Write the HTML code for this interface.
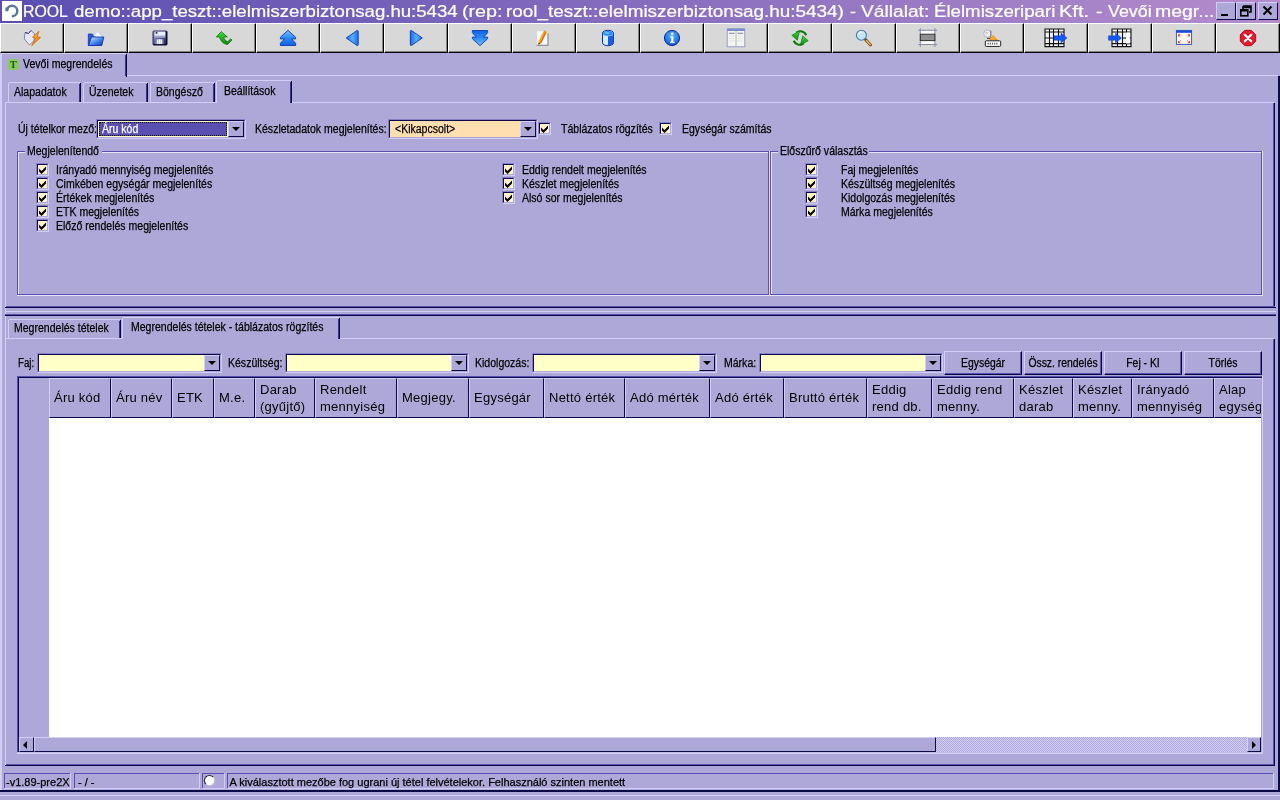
<!DOCTYPE html><html><head><meta charset="utf-8"><title>ROOL</title><style>
*{box-sizing:border-box;margin:0;padding:0}
html,body{width:1280px;height:800px;overflow:hidden;background:#aea8d9;font-family:"Liberation Sans",sans-serif;font-size:11px;color:#000}
.a{position:absolute}
.t{position:absolute;white-space:nowrap;line-height:14px;font-size:12px;transform-origin:0 0;transform:scaleX(0.877);-webkit-text-stroke:0.25px #000}
.h{position:absolute;white-space:nowrap;font-size:13px;line-height:17px;letter-spacing:0.25px}
.tb{position:absolute;top:23px;width:64px;height:30px;background:#d8d8d8;border-left:1px solid #fff;border-top:1px solid #fff;border-right:1px solid #000;border-bottom:1px solid #000}
.tb:after{content:"";position:absolute;right:0;top:0;bottom:0;width:1px;background:#848284}
.tb:before{content:"";position:absolute;left:0;right:0;bottom:0;height:1px;background:#848284}
.tb svg{position:absolute;left:23px;top:6px;width:16px;height:16px}
.cb{position:absolute;width:13px;height:13px;background:#fff4c8;border-top:1px solid #8a82c8;border-left:1px solid #8a82c8;border-right:1px solid #d2cef8;border-bottom:1px solid #d2cef8}
.cb:before{content:"";position:absolute;left:0;top:0;right:0;bottom:0;border-top:1px solid #0c0a46;border-left:1px solid #0c0a46;border-right:1px solid #aea8d9;border-bottom:1px solid #aea8d9}
.cb svg{position:absolute;left:1px;top:1px;width:9px;height:9px}
.combo{position:absolute;height:20px;border-style:solid;border-width:1px;border-color:#8a82c8 #d2cef8 #d2cef8 #8a82c8}
.combo:before{content:"";position:absolute;left:0;top:0;right:0;bottom:0;border-style:solid;border-width:1px;border-color:#0c0a46 #aea8d9 #aea8d9 #0c0a46}
.inn{position:absolute;left:1px;top:1px;right:1px;bottom:1px}
.cbtn{position:absolute;right:0;top:0;width:16px;height:16px;background:#aea8d9;border-top:1px solid #d2cef8;border-left:1px solid #d2cef8;border-right:1px solid #0c0a46;border-bottom:1px solid #0c0a46}
.cbtn:after{content:"";position:absolute;left:3px;top:5px;border-left:4px solid transparent;border-right:4px solid transparent;border-top:4px solid #000}
.btn{position:absolute;height:24px;background:#aea8d9;border-top:1px solid #d2cef8;border-left:1px solid #d2cef8;border-right:1px solid #0c0a46;border-bottom:1px solid #0c0a46;text-align:center;line-height:23px;font-size:12px;white-space:nowrap;overflow:hidden}
.btn span{position:absolute;left:50%;top:0;transform:translateX(-50%) scaleX(0.865);-webkit-text-stroke:0.25px #000}
.btn:before{content:"";position:absolute;left:0;top:0;right:0;bottom:0;border-right:1px solid #5a4eb1;border-bottom:1px solid #5a4eb1}
.hl{position:absolute;height:1px}
.vl{position:absolute;width:1px}
.hc{position:absolute;top:378px;height:39px;border-left:1px solid #d2cef8;border-top:1px solid #d2cef8;border-right:1px solid #0c0a46;border-bottom:1px solid #0c0a46}
</style></head><body><div style="position:absolute;left:0;top:0;width:1280px;height:800px;will-change:transform;opacity:0.999">
<div class="a" style="left:0;top:0;width:1280px;height:23px;background:linear-gradient(90deg,#5a4eb1 0%,#b48ccc 100%)"></div>
<div class="a" style="left:2px;top:1px;width:20px;height:20px;background:#fff"><svg width="20" height="20" viewBox="0 0 20 20"><path d="M4.9 9.6 A5.2 5.2 0 1 1 9.8 15.2" fill="none" stroke="#587a9e" stroke-width="2.5"/><path d="M3.4 6.6 L6.6 6.2 L6.4 10.2 L3.4 10.2 Z" fill="#587a9e"/></svg></div>
<div class="a" style="left:22.51px;top:1px;font-size:16px;line-height:21px;color:#fff;white-space:nowrap;transform-origin:0 0;transform:scaleX(0.9900);-webkit-text-stroke:0.2px #fff">ROOL</div>
<div class="a" style="left:73.75px;top:1px;font-size:16px;line-height:21px;color:#fff;white-space:nowrap;transform-origin:0 0;transform:scaleX(1.1626);-webkit-text-stroke:0.2px #fff">demo::app_teszt::elelmiszerbiztonsag.hu:5434</div>
<div class="a" style="left:461.77px;top:1px;font-size:16px;line-height:21px;color:#fff;white-space:nowrap;transform-origin:0 0;transform:scaleX(1.2314);-webkit-text-stroke:0.2px #fff">(rep:</div>
<div class="a" style="left:506.32px;top:1px;font-size:16px;line-height:21px;color:#fff;white-space:nowrap;transform-origin:0 0;transform:scaleX(1.1796);-webkit-text-stroke:0.2px #fff">rool_teszt::elelmiszerbiztonsag.hu:5434)</div>
<div class="a" style="left:849.50px;top:1px;font-size:16px;line-height:21px;color:#fff;white-space:nowrap;transform-origin:0 0;transform:scaleX(1.1000);-webkit-text-stroke:0.2px #fff">-</div>
<div class="a" style="left:861.00px;top:1px;font-size:16px;line-height:21px;color:#fff;white-space:nowrap;transform-origin:0 0;transform:scaleX(1.1987);-webkit-text-stroke:0.2px #fff">Vállalat:</div>
<div class="a" style="left:933.83px;top:1px;font-size:16px;line-height:21px;color:#fff;white-space:nowrap;transform-origin:0 0;transform:scaleX(1.1662);-webkit-text-stroke:0.2px #fff">Élelmiszeripari</div>
<div class="a" style="left:1059.25px;top:1px;font-size:16px;line-height:21px;color:#fff;white-space:nowrap;transform-origin:0 0;transform:scaleX(1.2522);-webkit-text-stroke:0.2px #fff">Kft.</div>
<div class="a" style="left:1096.00px;top:1px;font-size:16px;line-height:21px;color:#fff;white-space:nowrap;transform-origin:0 0;transform:scaleX(1.2000);-webkit-text-stroke:0.2px #fff">-</div>
<div class="a" style="left:1107.50px;top:1px;font-size:16px;line-height:21px;color:#fff;white-space:nowrap;transform-origin:0 0;transform:scaleX(1.1144);-webkit-text-stroke:0.2px #fff">Vevői</div>
<div class="a" style="left:1154.78px;top:1px;font-size:16px;line-height:21px;color:#fff;white-space:nowrap;transform-origin:0 0;transform:scaleX(1.2161);-webkit-text-stroke:0.2px #fff">megr...</div>
<div class="a" style="left:1216px;top:2px;width:20px;height:18px;background:#aea8d9;border-top:1px solid #d2cef8;border-left:1px solid #d2cef8;border-right:1px solid #0c0a46;border-bottom:1px solid #0c0a46"><svg class="a" style="left:0;top:0" width="18" height="16" viewBox="0 0 18 16"><rect x="4" y="11" width="7" height="2" fill="#000"/></svg></div>
<div class="a" style="left:1236px;top:2px;width:20px;height:18px;background:#aea8d9;border-top:1px solid #d2cef8;border-left:1px solid #d2cef8;border-right:1px solid #0c0a46;border-bottom:1px solid #0c0a46"><svg class="a" style="left:0;top:0" width="18" height="16" viewBox="0 0 18 16"><path d="M6 3h8v6h-2 M6 4.5h8 M6 3v3" fill="none" stroke="#000" stroke-width="1.6"/><rect x="3.8" y="6.8" width="7" height="6" fill="none" stroke="#000" stroke-width="1.6"/><path d="M3.8 7.6h7" stroke="#000" stroke-width="1.8"/></svg></div>
<div class="a" style="left:1258px;top:2px;width:20px;height:18px;background:#aea8d9;border-top:1px solid #d2cef8;border-left:1px solid #d2cef8;border-right:1px solid #0c0a46;border-bottom:1px solid #0c0a46"><svg class="a" style="left:0;top:0" width="18" height="16" viewBox="0 0 18 16"><path d="M4.5 3.5l8 8 M12.5 3.5l-8 8" stroke="#000" stroke-width="2" fill="none"/></svg></div>
<svg width="0" height="0" style="position:absolute"><defs>
<linearGradient id="gb" x1="0" y1="0" x2="0" y2="1"><stop offset="0" stop-color="#7fc0ff"/><stop offset="0.5" stop-color="#2a8cf8"/><stop offset="1" stop-color="#1060e0"/></linearGradient>
<linearGradient id="gbh" x1="0" y1="0" x2="1" y2="0"><stop offset="0" stop-color="#1866e0"/><stop offset="0.5" stop-color="#58b0ff"/><stop offset="1" stop-color="#1a70e8"/></linearGradient>
<linearGradient id="gg" x1="0" y1="0" x2="0" y2="1"><stop offset="0" stop-color="#38e038"/><stop offset="1" stop-color="#0c8a0c"/></linearGradient>
<linearGradient id="gf" x1="0" y1="0" x2="1" y2="1"><stop offset="0" stop-color="#e8f4ff"/><stop offset="0.5" stop-color="#4a8cf0"/><stop offset="1" stop-color="#0a30c0"/></linearGradient>
<linearGradient id="go" x1="0" y1="0" x2="1" y2="1"><stop offset="0" stop-color="#ffd040"/><stop offset="1" stop-color="#e86000"/></linearGradient>
<radialGradient id="gi" cx="0.5" cy="0.35" r="0.7"><stop offset="0" stop-color="#58b8ff"/><stop offset="1" stop-color="#0a50d8"/></radialGradient>
<linearGradient id="gs" x1="0" y1="0" x2="1" y2="0"><stop offset="0" stop-color="#8088b8"/><stop offset="0.5" stop-color="#e8e8f8"/><stop offset="1" stop-color="#404080"/></linearGradient>
<linearGradient id="gfl" x1="0" y1="0" x2="1" y2="1"><stop offset="0" stop-color="#a4a6d0"/><stop offset="0.55" stop-color="#54568c"/><stop offset="1" stop-color="#14144a"/></linearGradient>
</defs></svg>
<div class="tb" style="left:0px"><svg viewBox="0 0 16 16" style="overflow:visible"><path d="M1 2.5l3.5 1 2.5-3 3.5 3.2-.5 7-4.5 4.3L.3 9z" fill="#e4e8fa" stroke="#6a6e98" stroke-width=".8"/><path d="M1 2.5l3.5 1 2.5-3" fill="none" stroke="#3a3e78" stroke-width="1"/><path d="M15 1.2l-6.5 6 3 .8-3.8 7.8 8.8-8.4-3.2-.8z" fill="url(#go)" stroke="#d06000" stroke-width=".7"/></svg></div>
<div class="tb" style="left:64px"><svg viewBox="0 0 16 16" style="overflow:visible"><path d="M0.3 4h4l1.2 1.5h2V15.5H0.3z" fill="#2a5ad8" stroke="#0a2aa8" stroke-width=".7"/><path d="M5.5 6l4-4.5 4 4v3z" fill="#f4f8ff" stroke="#a8b8e0" stroke-width=".5"/><path d="M0.5 15.5l3-8.5h12.3l-2 8.5z" fill="url(#gf)" stroke="#0a28b0" stroke-width=".8"/></svg></div>
<div class="tb" style="left:128px"><svg viewBox="0 0 16 16" style="overflow:visible"><rect x="1" y="1" width="14" height="14" rx=".8" fill="url(#gfl)" stroke="#16164a" stroke-width=".9"/><rect x="2.6" y="1.6" width="10.6" height="5" fill="#eef0ff"/><rect x="2.6" y="5.600" width="10.600" height="2.200" fill="#a0a4cc"/><rect x="3.600" y="1.800" width="1.800" height="2" fill="#34346e"/><rect x="3.500" y="9.200" width="9" height="5.300" fill="url(#gs)"/><path d="M5.500 9.600v4.600M7.500 9.600v4.600M9.500 9.600v4.600" stroke="#fff" stroke-width=".8"/><path d="M14.600 1.500v13.100H1.500" fill="none" stroke="#0a0a30" stroke-width="1"/></svg></div>
<div class="tb" style="left:192px"><svg viewBox="0 0 16 16" style="overflow:visible"><path d="M5.3 1.6L0.3 7h3.2c1 4 4 7.4 8.2 7.4L16 10l-1.2-1.2-3 2.8c-2.3-.4-3.6-2.2-4-4.6h3.5z" fill="url(#gg)" stroke="#0a6a0a" stroke-width=".7"/></svg></div>
<div class="tb" style="left:256px"><svg viewBox="0 0 16 16" style="overflow:visible"><path d="M8 .3l7.6 7v1.6h-4l4 4.3v2.3H.4v-2.3l4-4.3h-4V7.3z" fill="url(#gb)" stroke="#0a3cb0" stroke-width=".9" stroke-linejoin="round"/></svg></div>
<div class="tb" style="left:320px"><svg viewBox="0 0 16 16" style="overflow:visible"><path d="M2.2 8L13 .6c.8-.4 1.2 0 1.2.8v13.2c0 .8-.4 1.2-1.2.8z" fill="url(#gbh)" stroke="#0a3cb0" stroke-width=".9" stroke-linejoin="round"/></svg></div>
<div class="tb" style="left:384px"><svg viewBox="0 0 16 16" style="overflow:visible"><path d="M14.3 8L3.5.6C2.700.2 2.300.6 2.300 1.400v13.200c0 .8.400 1.200 1.200.8z" fill="url(#gbh)" stroke="#0a3cb0" stroke-width=".9" stroke-linejoin="round"/></svg></div>
<div class="tb" style="left:448px"><svg viewBox="0 0 16 16" style="overflow:visible"><g transform="translate(0,16) scale(1,-1)"><path d="M8 .3l7.6 7v1.6h-4l4 4.3v2.3H.4v-2.3l4-4.3h-4V7.3z" fill="url(#gb)" stroke="#0a3cb0" stroke-width=".9" stroke-linejoin="round"/></g></svg></div>
<div class="tb" style="left:512px"><svg viewBox="0 0 16 16" style="overflow:visible"><rect x=".8" y="1" width="11" height="14" fill="#fbfbff" stroke="#c8cce0" stroke-width=".5"/><path d="M.5 15.3h11.8M12 3v12.3" stroke="#707080" stroke-width=".8" fill="none"/><path d="M8.3.8l2.200 1.100-5.500 11.300-2.400 1.300.200-2.700z" fill="#ffc020" stroke="#d87800" stroke-width=".6"/><path d="M9.300 1.300l1.200.6-5.500 11.300-1.100-.5z" fill="#e86800"/><path d="M2.600 14.500l.2-1.800 1.400.9z" fill="#402000"/></svg></div>
<div class="tb" style="left:576px"><svg viewBox="0 0 16 16" style="overflow:visible"><path d="M2.500 3.300c0-4 11-4 11 0v9.400c0 4-11 4-11 0z" fill="#d8ecff" stroke="#0a30b0" stroke-width="1"/><path d="M8 6.200c2.500 0 5.500-.8 5.500-2.500v9c0 1.700-3 2.800-5.500 2.800z" fill="#1a5ce0"/><ellipse cx="8" cy="3.400" rx="5" ry="2.400" fill="#2a8cf8"/><ellipse cx="7" cy="3" rx="2.500" ry="1" fill="#6ac0ff"/></svg></div>
<div class="tb" style="left:640px"><svg viewBox="0 0 16 16" style="overflow:visible"><circle cx="8" cy="8" r="7.600" fill="url(#gi)" stroke="#0a2a98" stroke-width="1"/><circle cx="8.200" cy="3.800" r="1.300" fill="#fff"/><path d="M6.200 6.300h3.200v5.500h1.200v1.200H6v-1.200h1.300V7.500H6.200z" fill="#fff"/></svg></div>
<div class="tb" style="left:704px"><svg viewBox="0 0 16 16" style="overflow:visible"><rect x="-.8" y="-1.200" width="17.600" height="18" fill="#f4f4f0" stroke="#8a94c0" stroke-width=".9"/><rect x="-.8" y="-1.200" width="17.600" height="2.200" fill="#7a8cc8"/><path d="M8 1v15.800" stroke="#a0a8c8" stroke-width=".8"/><path d="M1 3.300h5.500M9.500 3.300h5.500" stroke="#707890" stroke-width=".9"/><path d="M1 6h5M1 8.500h5M9.500 6h5M9.500 8.500h5M1 11h5M9.500 11h5" stroke="#dcdcd8" stroke-width=".7"/></svg></div>
<div class="tb" style="left:768px"><svg viewBox="0 0 16 16" style="overflow:visible"><path d="M14.300 5.200A6.400 6.400 0 0 0 4.500 2.600" fill="none" stroke="#0c7a0c" stroke-width="2.200"/><path d="M-.2 5.300L7.600 .8 5.300 10.200z" fill="url(#gg)" stroke="#0a6a0a" stroke-width=".6"/><path d="M1.700 10.800A6.400 6.400 0 0 0 11.500 13.400" fill="none" stroke="#0c7a0c" stroke-width="2.200"/><path d="M16.200 10.700L8.400 15.200 10.700 5.800z" fill="url(#gg)" stroke="#0a6a0a" stroke-width=".6"/></svg></div>
<div class="tb" style="left:832px"><svg viewBox="0 0 16 16" style="overflow:visible"><path d="M9.300 9.300l5.200 5.600" stroke="#6a4a18" stroke-width="3" stroke-linecap="round"/><path d="M10.500 10.600l3.800 4.100" stroke="#ecb850" stroke-width="1.500" stroke-linecap="round"/><circle cx="5.400" cy="5.200" r="5" fill="#c4e6fa" stroke="#4a78b0" stroke-width="1.100"/><path d="M2.500 4.500c.5-1.500 2-2.500 3.500-2.300" stroke="#fff" stroke-width="1.100" fill="none"/></svg></div>
<div class="tb" style="left:896px"><svg viewBox="0 0 16 16" style="overflow:visible"><rect x=".3" y=".300" width="14.600" height="14.200" fill="#fff"/><path d="M-1.600.3h18.600M-1.600 14.500h18.600M.3-1.700v18.700M14.900-1.700v18.700" stroke="#7a80a8" stroke-width=".9"/><rect x=".3" y="4.200" width="14.600" height="6.400" fill="#909090" stroke="#303030" stroke-width="1"/></svg></div>
<div class="tb" style="left:960px"><svg viewBox="0 0 16 16" style="overflow:visible"><circle cx="3.400" cy="3.600" r="3.600" fill="#f0f0f4" stroke="#a8a8b8" stroke-width=".8"/><circle cx="2.800" cy="3" r="1.200" fill="#c8c8d8"/><path d="M6.800.5v9" stroke="#606070" stroke-width=".8"/><path d="M9 5.300l4.500 4.600H5.500z" fill="#f8a818" stroke="#d88000" stroke-width=".4"/><path d="M3 8.300h3" stroke="#303030" stroke-width="1"/><rect x="1.300" y="10.800" width="15.400" height="5.600" rx="1" fill="#fff" stroke="#202020" stroke-width="1"/><path d="M3.500 13.600h11" stroke="#606060" stroke-width="1.600" stroke-dasharray="1.200 1"/></svg></div>
<div class="tb" style="left:1024px"><svg viewBox="0 0 16 16" style="overflow:visible"><g transform="translate(-3,-1)"><rect x="0" y="0" width="19" height="17.600" fill="#f4f4f8"/><path d="M0 0h19v17.600H0zM0 3h19M0 9h8M0 14.600h19M4.500 0v17.600M8.500 0v17.600M13.500 0v17.600" fill="none" stroke="#101010" stroke-width="1.100"/></g><g transform="translate(6,0)"><path d="M0 5.800h7V3l6 5-6 5v-2.800H0z" fill="#1458f8" stroke="#0a40d0" stroke-width=".5"/></g></svg></div>
<div class="tb" style="left:1088px"><svg viewBox="0 0 16 16" style="overflow:visible"><g transform="translate(19,-1) scale(-1,1)"><rect x="0" y="0" width="19" height="17.600" fill="#f4f4f8"/><path d="M0 0h19v17.600H0zM0 3h19M0 9h8M0 14.600h19M4.500 0v17.600M8.500 0v17.600M13.500 0v17.600" fill="none" stroke="#101010" stroke-width="1.100"/></g><rect x="14" y="2.500" width="3.800" height="11" fill="#fff"/><g transform="translate(-3.500,0)"><path d="M0 5.800h7V3l6 5-6 5v-2.800H0z" fill="#1458f8" stroke="#0a40d0" stroke-width=".5"/></g></svg></div>
<div class="tb" style="left:1152px"><svg viewBox="0 0 16 16" style="overflow:visible"><rect x=".4" y=".4" width="15.200" height="14" fill="#fff8f4" stroke="#2a50c0" stroke-width=".9"/><rect x=".4" y=".4" width="15.200" height="2.400" fill="#1a48d0"/><path d="M2 4.300h2.800l-2.800 2.800zM14 4.300h-2.800l2.800 2.800zM2 13.200h2.800L2 10.400zM14 13.200h-2.800l2.800-2.800z" fill="#e03818"/><path d="M3 5.300l2 2M13 5.300l-2 2M3 12.200l2-2M13 12.200l-2-2" stroke="#f08060" stroke-width="1"/></svg></div>
<div class="tb" style="left:1216px"><svg viewBox="0 0 16 16" style="overflow:visible"><path d="M4.800.3h6.400l4.500 4.500v6.400l-4.500 4.500H4.800L.3 11.200V4.800z" fill="#e8182c" stroke="#a80818" stroke-width=".9"/><path d="M4.800 4.800l6.400 6.400M11.200 4.800l-6.400 6.400" stroke="#fff" stroke-width="2.300" stroke-linecap="round"/></svg></div>
<div class="vl" style="left:0px;top:54px;height:738px;width:2px;background:#d2cef8"></div>
<div class="hl" style="left:1px;top:53px;width:125px;height:1px;background:#d2cef8"></div>
<div class="vl" style="left:126px;top:54px;height:23px;width:1px;background:#0c0a46"></div>
<div class="vl" style="left:125px;top:55px;height:21px;width:1px;background:#3a3290"></div>
<div class="hl" style="left:127px;top:75px;width:1151px;height:1px;background:#d2cef8"></div>
<div class="vl" style="left:1278px;top:76px;height:716px;width:2px;background:#0c0a46"></div>
<div class="hl" style="left:0px;top:790px;width:1280px;height:2px;background:#0c0a46"></div>
<div class="hl" style="left:0px;top:795px;width:1280px;height:1px;background:#d2cef8"></div>
<div class="a" style="left:8px;top:59px;width:11px;height:11px;background:#8cc860;border-radius:2px"></div>
<div class="a" style="left:10px;top:58px;font-family:'Liberation Serif';font-weight:bold;font-size:10px;line-height:13px;color:#0a5a0a">T</div>
<div class="t" style="left:23px;top:56.5px;">Vevői megrendelés</div>
<div class="hl" style="left:9px;top:82px;width:71px;height:1px;background:#d2cef8"></div>
<div class="vl" style="left:8px;top:83px;height:19px;width:1px;background:#d2cef8"></div>
<div class="vl" style="left:80px;top:83px;height:19px;width:1px;background:#0c0a46"></div>
<div class="vl" style="left:79px;top:84px;height:18px;width:1px;background:#3a3290"></div>
<div class="t" style="left:14px;top:84.5px;">Alapadatok</div>
<div class="hl" style="left:84px;top:82px;width:63px;height:1px;background:#d2cef8"></div>
<div class="vl" style="left:83px;top:83px;height:19px;width:1px;background:#d2cef8"></div>
<div class="vl" style="left:147px;top:83px;height:19px;width:1px;background:#0c0a46"></div>
<div class="vl" style="left:146px;top:84px;height:18px;width:1px;background:#3a3290"></div>
<div class="t" style="left:89px;top:84.5px;">Üzenetek</div>
<div class="hl" style="left:151px;top:82px;width:63px;height:1px;background:#d2cef8"></div>
<div class="vl" style="left:150px;top:83px;height:19px;width:1px;background:#d2cef8"></div>
<div class="vl" style="left:214px;top:83px;height:19px;width:1px;background:#0c0a46"></div>
<div class="vl" style="left:213px;top:84px;height:18px;width:1px;background:#3a3290"></div>
<div class="t" style="left:156px;top:84.5px;">Böngésző</div>
<div class="hl" style="left:217px;top:80px;width:74px;height:1px;background:#d2cef8"></div>
<div class="vl" style="left:216px;top:81px;height:22px;width:1px;background:#d2cef8"></div>
<div class="vl" style="left:291px;top:81px;height:22px;width:1px;background:#0c0a46"></div>
<div class="vl" style="left:290px;top:82px;height:21px;width:1px;background:#3a3290"></div>
<div class="t" style="left:224px;top:83.5px;">Beállítások</div>
<div class="hl" style="left:5px;top:102px;width:211px;height:1px;background:#d2cef8"></div>
<div class="hl" style="left:292px;top:102px;width:982px;height:1px;background:#d2cef8"></div>
<div class="vl" style="left:5px;top:102px;height:664px;width:1px;background:#d2cef8"></div>
<div class="vl" style="left:1274px;top:103px;height:205px;width:1px;background:#0c0a46"></div>
<div class="vl" style="left:1273px;top:103px;height:204px;width:1px;background:#5a4eb1"></div>
<div class="hl" style="left:5px;top:307px;width:1271px;height:1px;background:#0c0a46"></div>
<div class="hl" style="left:6px;top:306px;width:1269px;height:1px;background:#5a4eb1"></div>
<div class="t" style="left:18px;top:121.5px;">Új tételkor mező:</div>
<div class="combo" style="left:96px;top:119px;width:150px"><div class="inn"><div class="a" style="left:0;top:0;width:130px;height:16px;background:#ffffc8"></div><div class="a" style="left:1px;top:1px;width:128px;height:14px;background:#5a4eb1;outline:1px dotted #111;outline-offset:-1px"></div><div class="t" style="left:4px;top:0.5px;color:#fff;-webkit-text-stroke:0.25px #fff">Áru kód</div><div class="cbtn"></div></div></div>
<div class="t" style="left:255px;top:121.5px;">Készletadatok megjelenítés:</div>
<div class="combo" style="left:388px;top:119px;width:150px"><div class="inn"><div class="a" style="left:0;top:0;right:0;height:16px;background:#ffdeb0"></div><div class="t" style="left:5px;top:0.5px">&lt;Kikapcsolt&gt;</div><div class="cbtn"></div></div></div>
<div class="cb" style="left:538px;top:122px"><svg viewBox="0 0 9 9"><path d="M1 3.5v3l2.5 2.5l4.5-4.5v-3l-4.5 4.5z" fill="#000"/></svg></div>
<div class="t" style="left:561px;top:121.5px;">Táblázatos rögzítés</div>
<div class="cb" style="left:659px;top:122px"><svg viewBox="0 0 9 9"><path d="M1 3.5v3l2.5 2.5l4.5-4.5v-3l-4.5 4.5z" fill="#000"/></svg></div>
<div class="t" style="left:682px;top:121.5px;">Egységár számítás</div>
<div class="hl" style="left:17px;top:151px;width:8px;height:1px;background:#5a4eb1"></div>
<div class="hl" style="left:18px;top:152px;width:7px;height:1px;background:#e6e4fd"></div>
<div class="hl" style="left:102px;top:151px;width:667px;height:1px;background:#5a4eb1"></div>
<div class="hl" style="left:102px;top:152px;width:666px;height:1px;background:#e6e4fd"></div>
<div class="vl" style="left:17px;top:151px;height:144px;width:1px;background:#5a4eb1"></div>
<div class="vl" style="left:18px;top:152px;height:142px;width:1px;background:#e6e4fd"></div>
<div class="vl" style="left:768px;top:151px;height:144px;width:1px;background:#5a4eb1"></div>
<div class="vl" style="left:769px;top:151px;height:145px;width:1px;background:#e6e4fd"></div>
<div class="hl" style="left:17px;top:294px;width:752px;height:1px;background:#5a4eb1"></div>
<div class="hl" style="left:17px;top:295px;width:753px;height:1px;background:#e6e4fd"></div>
<div class="t" style="left:27px;top:143.5px;">Megjelenítendő</div>
<div class="hl" style="left:770px;top:151px;width:8px;height:1px;background:#5a4eb1"></div>
<div class="hl" style="left:771px;top:152px;width:7px;height:1px;background:#e6e4fd"></div>
<div class="hl" style="left:869px;top:151px;width:393px;height:1px;background:#5a4eb1"></div>
<div class="hl" style="left:869px;top:152px;width:392px;height:1px;background:#e6e4fd"></div>
<div class="vl" style="left:770px;top:151px;height:144px;width:1px;background:#5a4eb1"></div>
<div class="vl" style="left:771px;top:152px;height:142px;width:1px;background:#e6e4fd"></div>
<div class="vl" style="left:1261px;top:151px;height:144px;width:1px;background:#5a4eb1"></div>
<div class="vl" style="left:1262px;top:151px;height:145px;width:1px;background:#e6e4fd"></div>
<div class="hl" style="left:770px;top:294px;width:492px;height:1px;background:#5a4eb1"></div>
<div class="hl" style="left:770px;top:295px;width:493px;height:1px;background:#e6e4fd"></div>
<div class="t" style="left:780px;top:143.5px;">Előszűrő választás</div>
<div class="cb" style="left:36px;top:163px"><svg viewBox="0 0 9 9"><path d="M1 3.5v3l2.5 2.5l4.5-4.5v-3l-4.5 4.5z" fill="#000"/></svg></div>
<div class="t" style="left:56px;top:162.5px;">Irányadó mennyiség megjelenítés</div>
<div class="cb" style="left:36px;top:177px"><svg viewBox="0 0 9 9"><path d="M1 3.5v3l2.5 2.5l4.5-4.5v-3l-4.5 4.5z" fill="#000"/></svg></div>
<div class="t" style="left:56px;top:176.5px;">Cimkében egységár megjelenítés</div>
<div class="cb" style="left:36px;top:191px"><svg viewBox="0 0 9 9"><path d="M1 3.5v3l2.5 2.5l4.5-4.5v-3l-4.5 4.5z" fill="#000"/></svg></div>
<div class="t" style="left:56px;top:190.5px;">Értékek megjelenítés</div>
<div class="cb" style="left:36px;top:205px"><svg viewBox="0 0 9 9"><path d="M1 3.5v3l2.5 2.5l4.5-4.5v-3l-4.5 4.5z" fill="#000"/></svg></div>
<div class="t" style="left:56px;top:204.5px;">ETK megjelenítés</div>
<div class="cb" style="left:36px;top:219px"><svg viewBox="0 0 9 9"><path d="M1 3.5v3l2.5 2.5l4.5-4.5v-3l-4.5 4.5z" fill="#000"/></svg></div>
<div class="t" style="left:56px;top:218.5px;">Előző rendelés megjelenítés</div>
<div class="cb" style="left:502px;top:163px"><svg viewBox="0 0 9 9"><path d="M1 3.5v3l2.5 2.5l4.5-4.5v-3l-4.5 4.5z" fill="#000"/></svg></div>
<div class="t" style="left:522px;top:162.5px;">Eddig rendelt megjelenítés</div>
<div class="cb" style="left:502px;top:177px"><svg viewBox="0 0 9 9"><path d="M1 3.5v3l2.5 2.5l4.5-4.5v-3l-4.5 4.5z" fill="#000"/></svg></div>
<div class="t" style="left:522px;top:176.5px;">Készlet megjelenítés</div>
<div class="cb" style="left:502px;top:191px"><svg viewBox="0 0 9 9"><path d="M1 3.5v3l2.5 2.5l4.5-4.5v-3l-4.5 4.5z" fill="#000"/></svg></div>
<div class="t" style="left:522px;top:190.5px;">Alsó sor megjelenítés</div>
<div class="cb" style="left:805px;top:163px"><svg viewBox="0 0 9 9"><path d="M1 3.5v3l2.5 2.5l4.5-4.5v-3l-4.5 4.5z" fill="#000"/></svg></div>
<div class="t" style="left:841px;top:162.5px;">Faj megjelenítés</div>
<div class="cb" style="left:805px;top:177px"><svg viewBox="0 0 9 9"><path d="M1 3.5v3l2.5 2.5l4.5-4.5v-3l-4.5 4.5z" fill="#000"/></svg></div>
<div class="t" style="left:841px;top:176.5px;">Készültség megjelenítés</div>
<div class="cb" style="left:805px;top:191px"><svg viewBox="0 0 9 9"><path d="M1 3.5v3l2.5 2.5l4.5-4.5v-3l-4.5 4.5z" fill="#000"/></svg></div>
<div class="t" style="left:841px;top:190.5px;">Kidolgozás megjelenítés</div>
<div class="cb" style="left:805px;top:205px"><svg viewBox="0 0 9 9"><path d="M1 3.5v3l2.5 2.5l4.5-4.5v-3l-4.5 4.5z" fill="#000"/></svg></div>
<div class="t" style="left:841px;top:204.5px;">Márka megjelenítés</div>
<div class="hl" style="left:5px;top:311px;width:1271px;height:1px;background:#d2cef8"></div>
<div class="hl" style="left:5px;top:315px;width:1271px;height:1px;background:#0c0a46"></div>
<div class="hl" style="left:5px;top:314px;width:1271px;height:1px;background:#5a4eb1"></div>
<div class="hl" style="left:9px;top:319px;width:111px;height:1px;background:#d2cef8"></div>
<div class="vl" style="left:8px;top:320px;height:18px;width:1px;background:#d2cef8"></div>
<div class="vl" style="left:120px;top:320px;height:18px;width:1px;background:#0c0a46"></div>
<div class="vl" style="left:119px;top:321px;height:17px;width:1px;background:#3a3290"></div>
<div class="t" style="left:14px;top:320.5px;">Megrendelés tételek</div>
<div class="hl" style="left:123px;top:317px;width:216px;height:1px;background:#d2cef8"></div>
<div class="vl" style="left:122px;top:318px;height:21px;width:1px;background:#d2cef8"></div>
<div class="vl" style="left:339px;top:318px;height:21px;width:1px;background:#0c0a46"></div>
<div class="vl" style="left:338px;top:319px;height:20px;width:1px;background:#3a3290"></div>
<div class="t" style="left:131px;top:319.5px;">Megrendelés tételek - táblázatos rögzítés</div>
<div class="hl" style="left:5px;top:338px;width:117px;height:1px;background:#d2cef8"></div>
<div class="hl" style="left:340px;top:338px;width:934px;height:1px;background:#d2cef8"></div>
<div class="vl" style="left:1274px;top:339px;height:427px;width:1px;background:#0c0a46"></div>
<div class="vl" style="left:1273px;top:339px;height:426px;width:1px;background:#5a4eb1"></div>
<div class="hl" style="left:5px;top:765px;width:1270px;height:1px;background:#0c0a46"></div>
<div class="hl" style="left:6px;top:764px;width:1268px;height:1px;background:#5a4eb1"></div>
<div class="t" style="left:18px;top:355.5px;transform:scaleX(0.81)">Faj:</div>
<div class="combo" style="left:37px;top:353px;width:185px"><div class="inn"><div class="a" style="left:0;top:0;right:0;height:16px;background:#ffffc8"></div><div class="cbtn"></div></div></div>
<div class="t" style="left:228px;top:355.5px;">Készültség:</div>
<div class="combo" style="left:285px;top:353px;width:184px"><div class="inn"><div class="a" style="left:0;top:0;right:0;height:16px;background:#ffffc8"></div><div class="cbtn"></div></div></div>
<div class="t" style="left:475px;top:355.5px;">Kidolgozás:</div>
<div class="combo" style="left:532px;top:353px;width:185px"><div class="inn"><div class="a" style="left:0;top:0;right:0;height:16px;background:#ffffc8"></div><div class="cbtn"></div></div></div>
<div class="t" style="left:724px;top:355.5px;">Márka:</div>
<div class="combo" style="left:759px;top:353px;width:184px"><div class="inn"><div class="a" style="left:0;top:0;right:0;height:16px;background:#ffffc8"></div><div class="cbtn"></div></div></div>
<div class="btn" style="left:944px;top:351px;width:78px"><span>Egységár</span></div>
<div class="btn" style="left:1024px;top:351px;width:78px"><span>Össz. rendelés</span></div>
<div class="btn" style="left:1104px;top:351px;width:78px"><span>Fej - KI</span></div>
<div class="btn" style="left:1184px;top:351px;width:78px"><span>Törlés</span></div>
<div class="hl" style="left:17px;top:376px;width:1245px;height:1px;background:#5a4eb1"></div>
<div class="vl" style="left:17px;top:376px;height:377px;width:1px;background:#5a4eb1"></div>
<div class="hl" style="left:18px;top:377px;width:1244px;height:1px;background:#0c0a46"></div>
<div class="vl" style="left:18px;top:377px;height:375px;width:1px;background:#0c0a46"></div>
<div class="hl" style="left:17px;top:753px;width:1246px;height:1px;background:#d2cef8"></div>
<div class="hl" style="left:17px;top:752px;width:1245px;height:1px;background:#c2bee8"></div>
<div class="vl" style="left:1262px;top:376px;height:378px;width:1px;background:#d2cef8"></div>
<div class="a" style="left:49px;top:418px;width:1212px;height:319px;background:#fff"></div>
<div class="a" style="left:49px;top:378px;width:1212px;height:40px;overflow:hidden">
<div class="hc" style="top:0;left:0px;width:62px;height:40px"><div class="h" style="left:4px;top:10px">Áru kód</div></div>
<div class="hc" style="top:0;left:62px;width:61px;height:40px"><div class="h" style="left:4px;top:10px">Áru név</div></div>
<div class="hc" style="top:0;left:123px;width:42px;height:40px"><div class="h" style="left:4px;top:10px">ETK</div></div>
<div class="hc" style="top:0;left:165px;width:41px;height:40px"><div class="h" style="left:4px;top:10px">M.e.</div></div>
<div class="hc" style="top:0;left:206px;width:60px;height:40px"><div class="h" style="left:4px;top:2px">Darab<br>(gyűjtő)</div></div>
<div class="hc" style="top:0;left:266px;width:82px;height:40px"><div class="h" style="left:4px;top:2px">Rendelt<br>mennyiség</div></div>
<div class="hc" style="top:0;left:348px;width:72px;height:40px"><div class="h" style="left:4px;top:10px">Megjegy.</div></div>
<div class="hc" style="top:0;left:420px;width:75px;height:40px"><div class="h" style="left:4px;top:10px">Egységár</div></div>
<div class="hc" style="top:0;left:495px;width:81px;height:40px"><div class="h" style="left:4px;top:10px">Nettó érték</div></div>
<div class="hc" style="top:0;left:576px;width:85px;height:40px"><div class="h" style="left:4px;top:10px">Adó mérték</div></div>
<div class="hc" style="top:0;left:661px;width:74px;height:40px"><div class="h" style="left:4px;top:10px">Adó érték</div></div>
<div class="hc" style="top:0;left:735px;width:83px;height:40px"><div class="h" style="left:4px;top:10px">Bruttó érték</div></div>
<div class="hc" style="top:0;left:818px;width:65px;height:40px"><div class="h" style="left:4px;top:2px">Eddig<br>rend db.</div></div>
<div class="hc" style="top:0;left:883px;width:82px;height:40px"><div class="h" style="left:4px;top:2px">Eddig rend<br>menny.</div></div>
<div class="hc" style="top:0;left:965px;width:59px;height:40px"><div class="h" style="left:4px;top:2px">Készlet<br>darab</div></div>
<div class="hc" style="top:0;left:1024px;width:59px;height:40px"><div class="h" style="left:4px;top:2px">Készlet<br>menny.</div></div>
<div class="hc" style="top:0;left:1083px;width:82px;height:40px"><div class="h" style="left:4px;top:2px">Irányadó<br>mennyiség</div></div>
<div class="hc" style="top:0;left:1165px;width:82px;height:40px"><div class="h" style="left:4px;top:2px">Alap<br>egység</div></div>
</div>
<div class="a" style="left:19px;top:737px;width:1242px;height:15px;background:repeating-conic-gradient(#d2cef8 0% 25%,#aea8d9 0% 50%) 0 0/2px 2px"></div>
<div class="a" style="left:19px;top:737px;width:15px;height:15px;background:#aea8d9;border-top:1px solid #d2cef8;border-left:1px solid #d2cef8;border-right:1px solid #0c0a46;border-bottom:1px solid #0c0a46"><div class="a" style="left:3px;top:3px;border-top:4px solid transparent;border-bottom:4px solid transparent;border-right:4px solid #000"></div></div>
<div class="a" style="left:34px;top:737px;width:902px;height:15px;background:#aea8d9;border-top:1px solid #d2cef8;border-left:1px solid #d2cef8;border-right:1px solid #0c0a46;border-bottom:1px solid #0c0a46"></div>
<div class="a" style="left:1247px;top:737px;width:14px;height:15px;background:#aea8d9;border-top:1px solid #d2cef8;border-left:1px solid #d2cef8;border-right:1px solid #0c0a46;border-bottom:1px solid #0c0a46"><div class="a" style="left:4px;top:3px;border-top:4px solid transparent;border-bottom:4px solid transparent;border-left:4px solid #000"></div></div>
<div class="hl" style="left:4px;top:773px;width:66px;height:1px;background:#5a4eb1"></div>
<div class="vl" style="left:4px;top:773px;height:15px;width:1px;background:#5a4eb1"></div>
<div class="hl" style="left:4px;top:788px;width:67px;height:1px;background:#d2cef8"></div>
<div class="vl" style="left:70px;top:773px;height:16px;width:1px;background:#d2cef8"></div>
<div class="hl" style="left:74px;top:773px;width:125px;height:1px;background:#5a4eb1"></div>
<div class="vl" style="left:74px;top:773px;height:15px;width:1px;background:#5a4eb1"></div>
<div class="hl" style="left:74px;top:788px;width:126px;height:1px;background:#d2cef8"></div>
<div class="vl" style="left:199px;top:773px;height:16px;width:1px;background:#d2cef8"></div>
<div class="hl" style="left:202px;top:773px;width:22px;height:1px;background:#5a4eb1"></div>
<div class="vl" style="left:202px;top:773px;height:15px;width:1px;background:#5a4eb1"></div>
<div class="hl" style="left:202px;top:788px;width:23px;height:1px;background:#d2cef8"></div>
<div class="vl" style="left:224px;top:773px;height:16px;width:1px;background:#d2cef8"></div>
<div class="hl" style="left:227px;top:773px;width:1046px;height:1px;background:#5a4eb1"></div>
<div class="vl" style="left:227px;top:773px;height:15px;width:1px;background:#5a4eb1"></div>
<div class="hl" style="left:227px;top:788px;width:1047px;height:1px;background:#d2cef8"></div>
<div class="vl" style="left:1273px;top:773px;height:16px;width:1px;background:#d2cef8"></div>
<div class="t" style="left:6px;top:775.5px;font-size:11px;line-height:13px;transform:none">-v1.89-pre2X</div>
<div class="t" style="left:78px;top:775.5px;font-size:11px;line-height:13px;transform:none">- / -</div>
<div class="a" style="left:204px;top:775px;width:11px;height:11px;border-radius:50%;background:#fff;border-top:1.5px solid #222;border-left:1.5px solid #222;border-right:1px solid #c8c4ec;border-bottom:1px solid #c8c4ec"></div>
<div class="t" style="left:229.5px;top:775.5px;font-size:11px;line-height:13px;transform:none">A kiválasztott mezőbe fog ugrani új tétel felvételekor. Felhasználó szinten mentett</div>
</div></body></html>
